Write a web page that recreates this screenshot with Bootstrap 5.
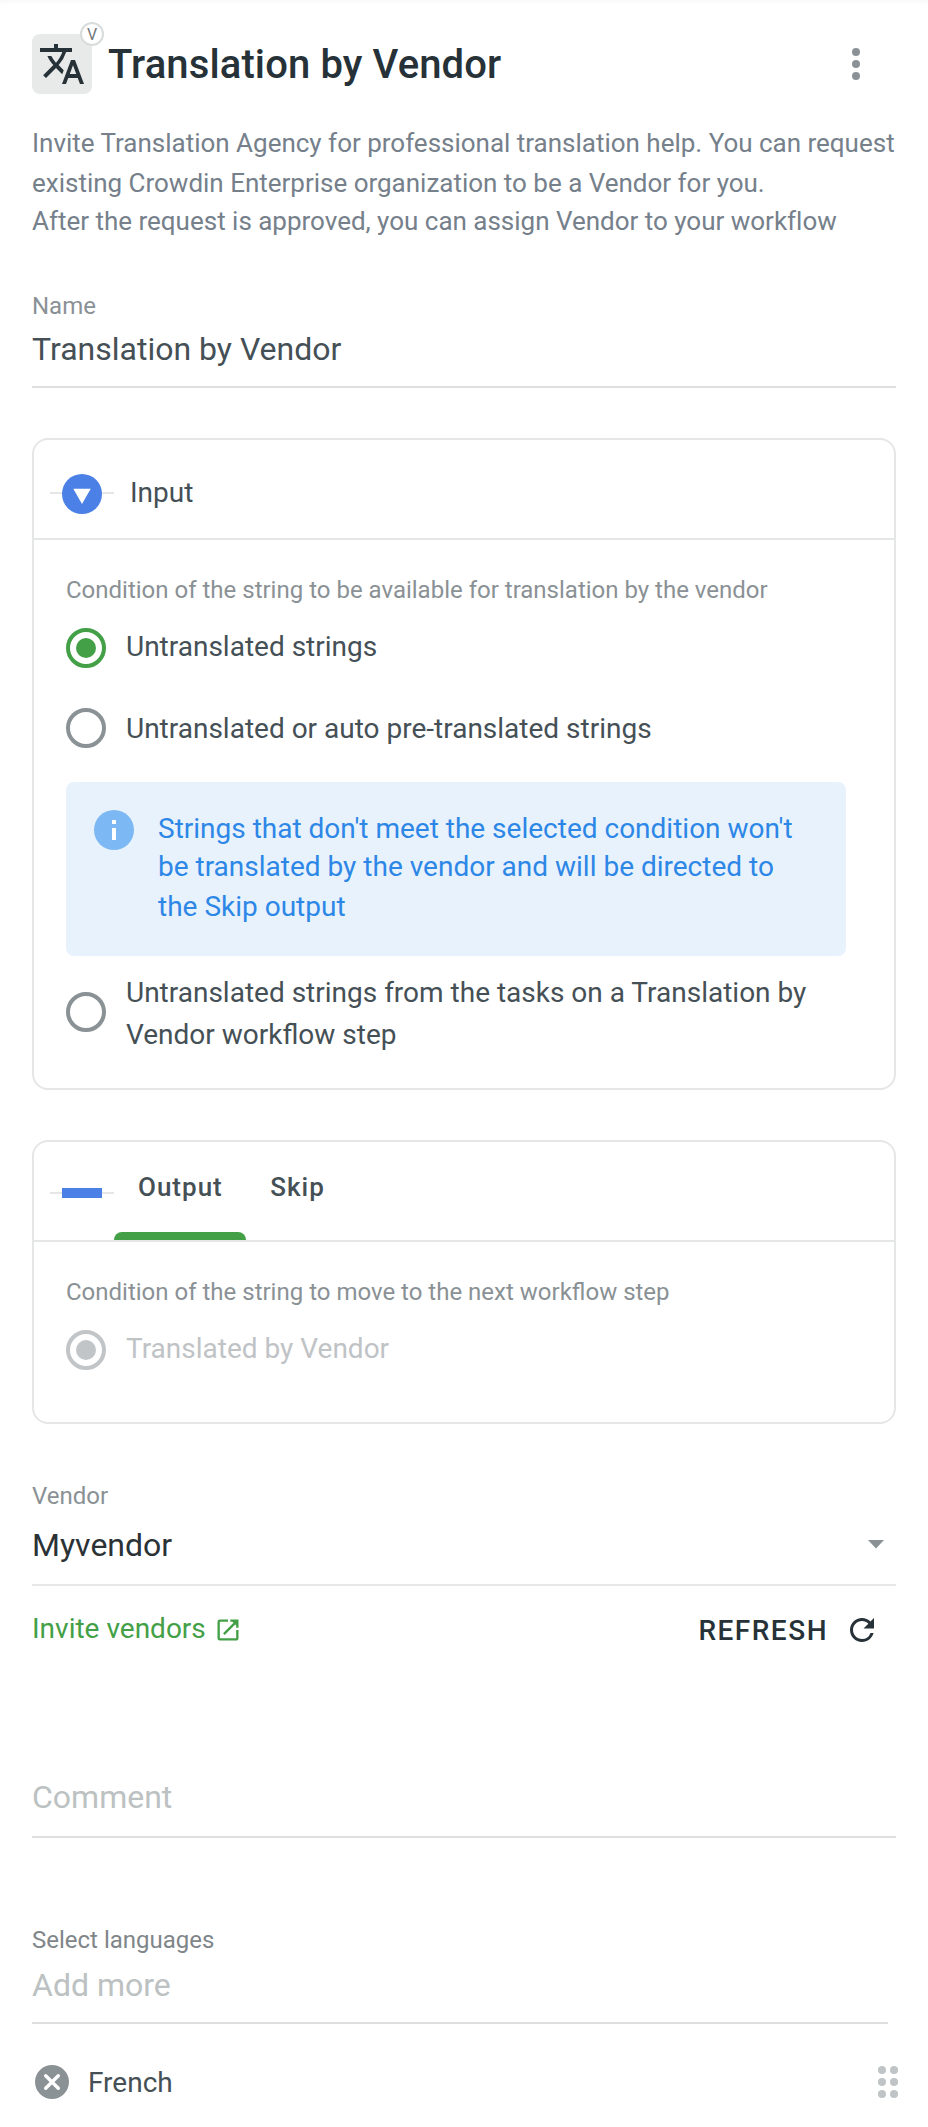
<!DOCTYPE html>
<html lang="en">
<head>
<meta charset="utf-8">
<title>Translation by Vendor</title>
<meta name="viewport" content="width=device-width, initial-scale=1">
<link href="https://cdn.jsdelivr.net/npm/bootstrap@5.3.0/dist/css/bootstrap.min.css" rel="stylesheet">
<style>
  body { font-family: Roboto, "Liberation Sans", sans-serif; font-size: 28px; line-height: 40px; color: #455056; background: #fff; overflow: hidden; }
  svg { display: block; flex: none; }
  .panel { padding: 34px 32px 0; height: 2127px; box-shadow: inset 0 4px 4px -2px #f6f7f7; }
  .step-icon { width: 60px; height: 60px; border-radius: 8px; background: #e8eaea; }
  .step-tag { top: -12px; right: -12px; width: 24px; height: 24px; border: 2px solid #d9dcdc; font-size: 16px; line-height: 22px; color: #6f777b; }
  h1 { font-size: 40px; line-height: 60px; font-weight: 500; letter-spacing: .12px; color: #263238; margin-left: 16px; padding-top: 1px; height: 60px; }
  .kebab { margin-right: 36px; }
  .intro { font-size: 26px; color: #75808b; margin-top: 30px; white-space: nowrap; letter-spacing: -.01px; }
  .intro span:nth-child(1) { line-height: 39px; }
  .intro span:nth-child(2) { line-height: 41px; }
  .intro span:nth-child(3) { line-height: 35px; }
  .caption { font-size: 24px; line-height: 32px; color: #8a9195; }
  .field-value { font-size: 32px; line-height: 48px; }
  .rule { border-bottom: 2px solid #dfdfdf; }
  .box { margin-top: 50px; border: 2px solid #e5e6e6; border-radius: 16px; }
  .box-head { height: 100px; border-bottom: 2px solid #e5e6e6; padding-left: 16px; }
  .box-body { padding: 34px 32px 0; }
  .head-label { margin: 33px 0 0 16px; }
  .opt { gap: 20px; }
  .opt span { padding-top: 1px; }
  .opt.first { margin-top: 20px; }
  .opt.first svg { margin-top: 2px; }
  .opt.two-line { line-height: 42px; margin-top: 12px; }
  .opt.two-line span { padding-top: 4px; }
  .note { width: 780px; height: 174px; margin-top: 33px; border-radius: 8px; background: #e8f2fd; color: #2d87e6; padding: 27px 0 0 28px; gap: 24px; }
  .note svg { margin-top: 1px; }
  .note span:nth-child(1) { line-height: 39px; }
  .note span:nth-child(2) { line-height: 37px; }
  .note span:nth-child(3) { line-height: 43px; }
  .tab-item { font-size: 26px; font-weight: 500; letter-spacing: 1px; padding: 0 23.5px 8px 24px; height: 98px; border: 0; background: none; color: inherit; }
  .tab-item.active::after { content: ""; position: absolute; left: 0; right: 0; bottom: 0; height: 8px; background: #43a047; border-radius: 8px 8px 0 0; }
  .invite { color: #43a047; gap: 8px; padding-top: 1px; }
  .refresh { color: #263238; font-weight: 500; letter-spacing: 1.5px; padding-top: 3px; }
  .dim { color: #bfc3c6; }
  .hint { color: #bcc1c2; }
</style>
</head>
<body>
<main class="panel">
  <header class="d-flex align-items-center">
    <div class="step-icon position-relative d-flex align-items-center justify-content-center">
      <svg width="48" height="48" viewBox="0 0 24 24" fill="#263238"><path d="M12.87 15.07l-2.54-2.51.03-.03A17.52 17.52 0 0 0 14.07 6H17V4h-7V2H8v2H1v2h11.17C11.5 7.92 10.44 9.75 9 11.35 8.07 10.32 7.3 9.19 6.69 8h-2c.73 1.63 1.73 3.17 2.98 4.56l-5.09 5.02L4 19l5-5 3.11 3.11.76-2.04zM18.5 10h-2L12 22h2l1.12-3h4.75L21 22h2l-4.5-12zm-2.62 7l1.62-4.33L19.12 17h-3.24z"/></svg>
      <span class="step-tag position-absolute rounded-circle bg-white text-center">V</span>
    </div>
    <h1 class="mb-0">Translation by Vendor</h1>
    <svg class="kebab ms-auto" width="8" height="32" viewBox="0 0 8 32" fill="#8b9296"><circle cx="4" cy="4" r="4"/><circle cx="4" cy="16" r="4"/><circle cx="4" cy="28" r="4"/></svg>
  </header>

  <p class="intro mb-0"><span class="d-block">Invite Translation Agency for professional translation help. You can request</span><span class="d-block">existing Crowdin Enterprise organization to be a Vendor for you.</span><span class="d-block">After the request is approved, you can assign Vendor to your workflow</span></p>

  <section class="rule" style="margin-top:51px;height:98px">
    <div class="caption">Name</div>
    <div class="field-value" style="padding-top:3px">Translation by Vendor</div>
  </section>

  <section class="box" style="height:652px">
    <div class="box-head d-flex">
      <svg class="mt-4" width="64" height="60" viewBox="0 0 64 60"><path d="M0 29h64" stroke="#e5e6e6" stroke-width="2"/><circle cx="32" cy="30" r="20" fill="#4b80e6"/><path d="M23.300 24.800h17.400L32 40z" fill="#fff"/></svg>
      <span class="head-label">Input</span>
    </div>
    <div class="box-body">
      <div class="caption">Condition of the string to be available for translation by the vendor</div>
      <div class="opt first d-flex">
        <svg width="40" height="40" viewBox="0 0 40 40"><circle cx="20" cy="20" r="18" fill="none" stroke="#43a047" stroke-width="4"/><circle cx="20" cy="20" r="10" fill="#43a047"/></svg>
        <span>Untranslated strings</span>
      </div>
      <div class="opt d-flex" style="margin-top:40px">
        <svg width="40" height="40" viewBox="0 0 40 40"><circle cx="20" cy="20" r="18" fill="none" stroke="#8b9296" stroke-width="4"/></svg>
        <span>Untranslated or auto pre-translated strings</span>
      </div>
      <div class="note d-flex">
        <svg width="40" height="40" viewBox="0 0 40 40"><circle cx="20" cy="20" r="20" fill="#7cb8f3"/><path d="M18 10h4v4h-4zM18 18h4v12h-4z" fill="#fff"/></svg>
        <div><span class="d-block">Strings that don't meet the selected condition won't</span><span class="d-block">be translated by the vendor and will be directed to</span><span class="d-block">the Skip output</span></div>
      </div>
      <div class="opt two-line d-flex align-items-center">
        <svg width="40" height="40" viewBox="0 0 40 40"><circle cx="20" cy="20" r="18" fill="none" stroke="#8b9296" stroke-width="4"/></svg>
        <span>Untranslated strings from the tasks on a Translation by<br>Vendor workflow step</span>
      </div>
    </div>
  </section>

  <section class="box" style="height:284px">
    <div class="box-head d-flex">
      <svg width="64" height="98" viewBox="0 0 64 98"><path d="M0 51h64" stroke="#e5e6e6" stroke-width="2"/><path d="M12 46h40v10H12z" fill="#4b80e6"/></svg>
      <button class="tab-item active position-relative">Output</button>
      <button class="tab-item">Skip</button>
    </div>
    <div class="box-body">
      <div class="caption">Condition of the string to move to the next workflow step</div>
      <div class="opt first d-flex dim">
        <svg width="40" height="40" viewBox="0 0 40 40"><circle cx="20" cy="20" r="18" fill="none" stroke="#c1c5c8" stroke-width="4"/><circle cx="20" cy="20" r="10" fill="#c1c5c8"/></svg>
        <span>Translated by Vendor</span>
      </div>
    </div>
  </section>

  <section class="rule" style="margin-top:56px;height:106px;border-color:#e6e7e7">
    <div class="caption">Vendor</div>
    <div class="field-value d-flex align-items-center" style="margin-top:9px;color:#2b3235">Myvendor
      <svg class="ms-auto" style="margin-right:12px;margin-bottom:1px" width="16" height="9" viewBox="0 0 16 9" fill="#8b9296"><path d="M0 0h16L8 8.500z"/></svg>
    </div>
  </section>
  <div class="d-flex" style="margin-top:22px;height:44px">
    <a class="invite d-flex text-decoration-none" href="#">Invite vendors
      <svg style="margin-top:7px" width="28" height="28" viewBox="0 0 24 24" fill="currentColor"><path d="M19 19H5V5h7V3H5a2 2 0 0 0-2 2v14a2 2 0 0 0 2 2h14c1.100 0 2-.9 2-2v-7h-2v7zM14 3v2h3.590l-9.830 9.830 1.410 1.410L19 6.410V10h2V3h-7z"/><path d="M15 4h5v5z"/></svg>
    </a>
    <span class="refresh ms-auto">REFRESH</span>
    <svg style="margin:4px 16px 0" width="36" height="36" viewBox="0 0 24 24" fill="#263238"><path d="M17.650 6.350A7.960 7.960 0 0 0 12 4c-4.420 0-7.990 3.580-7.990 8s3.570 8 7.990 8c3.730 0 6.840-2.550 7.730-6h-2.080A5.990 5.990 0 0 1 12 18c-3.310 0-6-2.690-6-6s2.690-6 6-6c1.660 0 3.140.69 4.220 1.780L13 11h7V4l-2.350 2.350z"/></svg>
  </div>

  <section class="rule field-value hint" style="margin-top:121px;height:65px">Comment</section>

  <section class="rule" style="width:856px;margin-top:86px;height:100px">
    <div class="caption" style="color:#7f868a">Select languages</div>
    <div class="field-value hint" style="padding-top:5px">Add more</div>
  </section>
  <div class="d-flex align-items-center" style="margin-top:38px;height:40px">
    <svg style="margin-left:3px" width="34" height="34" viewBox="0 0 34 34"><circle cx="17" cy="17" r="17" fill="#8b9296"/><path d="M10.700 10.700l12.600 12.600M23.300 10.700l-12.600 12.600" stroke="#fff" stroke-width="3.400" stroke-linecap="round"/></svg>
    <span style="margin-left:19px;padding-top:2px">French</span>
    <svg class="ms-auto" style="margin-right:-2px" width="20" height="32" viewBox="0 0 20 32" fill="#bfc4c6"><circle cx="4" cy="4" r="4"/><circle cx="16" cy="4" r="4"/><circle cx="4" cy="16" r="4"/><circle cx="16" cy="16" r="4"/><circle cx="4" cy="28" r="4"/><circle cx="16" cy="28" r="4"/></svg>
  </div>
</main>
<script src="https://cdn.jsdelivr.net/npm/bootstrap@5.3.0/dist/js/bootstrap.bundle.min.js"></script>
</body>
</html>
